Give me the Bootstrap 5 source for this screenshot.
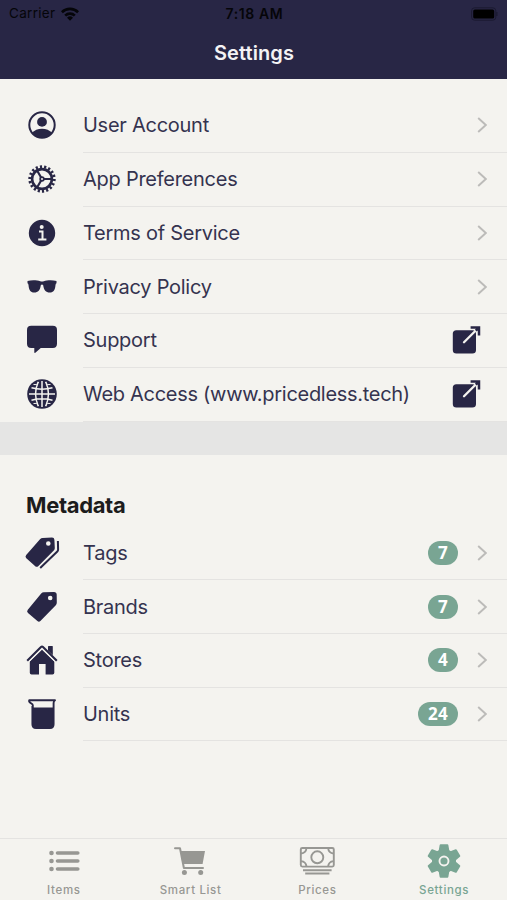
<!DOCTYPE html>
<html lang="en">
<head>
<meta charset="utf-8">
<meta name="viewport" content="width=device-width, initial-scale=1">
<title>Settings</title>
<link href="https://cdn.jsdelivr.net/npm/bootstrap@5.3.0/dist/css/bootstrap.min.css" rel="stylesheet">
<style>
:root{--navy:#282645;--paper:#f4f3ef;--sage:#79a593}
body{font-family:Inter,"Liberation Sans",sans-serif;background:var(--paper);color:#35334f;height:900px;overflow:hidden}
svg{display:block;flex:none}
.topbar{background:var(--navy);height:79px}
.status{height:27px;color:#050509;font-size:13.5px;padding:0 9px;letter-spacing:.3px}
.status>*{flex:1 1 0}
.clock{font-size:14px;font-weight:600;letter-spacing:.6px;padding-left:2px}
.page-title{height:51px;color:#f4f3f5;font-size:20px;font-weight:600;letter-spacing:.1px;padding-left:1px}
.first-list{padding-top:20.1px}
.setting{height:53.75px;padding-left:24px}
.setting svg.glyph{color:var(--navy)}
.setting>svg.glyph{margin-top:-1px}
.setting-body{margin-left:23px;padding-right:20px;border-bottom:1px solid #e4e3e1;font-size:20px;letter-spacing:-.26px;white-space:nowrap}
.long-label{letter-spacing:-.29px}
.setting-body svg.glyph{margin-right:5.5px}
.band{height:33.8px;background:#e5e5e4}
.section-title{font-size:22px;font-weight:700;color:#1c1c1c;letter-spacing:-.35px;height:71px;padding:28px 0 0 26px;line-height:44.500px}
.count{font-family:"Open Sans","Noto Sans",sans-serif;background:var(--sage);font-size:17px;font-weight:700;height:24px;line-height:23.500px;padding:0 9.800px;margin-right:19px;letter-spacing:.4px}
.chev{color:#bcbbb9}
.tabs{height:62px;border-top:1px solid #e4e3e1;color:#979793;font-size:11.500px;font-weight:500;letter-spacing:.65px}
.tabs a{padding-top:4px;color:inherit}
.tabs .active{color:var(--sage)}
.tabs span{line-height:16px;margin-top:3px;margin-left:1px}
</style>
</head>
<body class="d-flex flex-column">
<svg width="0" height="0" class="position-absolute">
<defs>
<symbol id="chev" viewBox="0 0 10 18"><path d="M1.200 2L8.800 9L1.200 16" fill="none" stroke="currentColor" stroke-width="1.900"/></symbol>
<symbol id="ext" viewBox="0 0 30 30"><rect x=".8" y="5.200" width="23.200" height="23.400" rx="3.600" fill="currentColor"/><path d="M12 17.300L25.500 3.800" stroke="#f4f3ef" stroke-width="2.300" stroke-linecap="round"/><path d="M18.600 2.400H27V10.600M27 2.400L23.800 5.600" stroke="currentColor" stroke-width="2.500" fill="none"/></symbol>
</defs>
</svg>
<header class="topbar">
<div class="status d-flex align-items-center">
<div class="d-flex align-items-center gap-2"><span>Carrier</span>
<svg width="18" height="14" viewBox="0 0 18 14" style="margin-left:-2px"><g fill="none" stroke="currentColor" stroke-width="2.700"><path d="M.9 5.200A11.600 11.600 0 0 1 17.100 5.200"/><path d="M4.200 8.600A6.800 6.800 0 0 1 13.800 8.600"/></g><path d="M9 13.800L6 10.800A4.300 4.300 0 0 1 12 10.800Z" fill="currentColor"/></svg></div>
<div class="clock text-center">7:18 AM</div>
<div class="d-flex justify-content-end"><svg width="27" height="14" viewBox="0 0 27 14"><rect x=".6" y=".8" width="24.200" height="12.400" rx="3" fill="none" stroke="#1b1a31"/><rect x="2.200" y="2.400" width="21" height="9.200" rx="1.700" fill="#000"/><path d="M25.900 5v4" stroke="#1b1a31" stroke-width="1.200"/></svg></div>
</div>
<h1 class="page-title m-0 d-flex align-items-center justify-content-center">Settings</h1>
</header>

<main class="flex-grow-1">
<section class="first-list">
<div class="setting d-flex align-items-center">
<svg class="glyph" width="36" height="36" viewBox="0 0 36 36"><circle cx="18" cy="18" r="12.700" fill="none" stroke="currentColor" stroke-width="2"/><circle cx="18" cy="14.900" r="4.900" fill="currentColor"/><path d="M8 26.100C10.200 23.200 14 21.800 18 21.800S25.800 23.200 28 26.100A13 13 0 0 1 8 26.100Z" fill="currentColor"/></svg>
<div class="setting-body d-flex align-items-center flex-grow-1 h-100"><span class="flex-grow-1">User Account</span><svg class="chev" width="10" height="18"><use href="#chev"/></svg></div>
</div>
<div class="setting d-flex align-items-center">
<svg class="glyph" width="36" height="36" viewBox="0 0 36 36"><g fill="none" stroke="currentColor"><circle cx="18" cy="18" r="12.300" stroke-width="2.800" stroke-dasharray="2.200 2.128" pathLength="77.900"/><circle cx="18" cy="18" r="9.900" stroke-width="2.600"/><path d="M18.500 18H27.500M17.700 17.500L13.200 9.800M17.700 18.500L13.200 26.200" stroke-width="2.200"/></g><circle cx="18" cy="18" r="2.700" fill="currentColor"/><circle cx="18" cy="18" r="1" fill="#f4f3ef"/></svg>
<div class="setting-body d-flex align-items-center flex-grow-1 h-100"><span class="flex-grow-1">App Preferences</span><svg class="chev" width="10" height="18"><use href="#chev"/></svg></div>
</div>
<div class="setting d-flex align-items-center">
<svg class="glyph" width="36" height="36" viewBox="0 0 36 36"><circle cx="18" cy="18" r="13.200" fill="currentColor"/><circle cx="17.700" cy="11.900" r="2" fill="#f4f3ef"/><path d="M15 16.400H18.500V24.200M14.200 24.400H22.400" fill="none" stroke="#f4f3ef" stroke-width="2"/></svg>
<div class="setting-body d-flex align-items-center flex-grow-1 h-100"><span class="flex-grow-1">Terms of Service</span><svg class="chev" width="10" height="18"><use href="#chev"/></svg></div>
</div>
<div class="setting d-flex align-items-center">
<svg class="glyph" width="36" height="36" viewBox="0 0 36 36"><path d="M3.500 11.900C7.500 11 13 11.100 16.200 12.200Q18 12.700 19.800 12.200C23 11.100 28.500 11 32.500 11.900V14.200Q31.700 14.500 31.500 16C31 21.500 29.500 23.500 25.800 23.500C21.800 23.500 19.900 21 19.200 16.200Q18 14.900 16.800 16.200C16.100 21 14.200 23.500 10.200 23.500C6.500 23.500 5 21.500 4.500 16Q4.300 14.500 3.500 14.200Z" fill="currentColor"/></svg>
<div class="setting-body d-flex align-items-center flex-grow-1 h-100"><span class="flex-grow-1">Privacy Policy</span><svg class="chev" width="10" height="18"><use href="#chev"/></svg></div>
</div>
<div class="setting d-flex align-items-center">
<svg class="glyph" width="36" height="36" viewBox="0 0 36 36"><path d="M7.200 3.800H28.800Q33 3.800 33 8V21.800Q33 26 28.800 26H16.800L11.300 30.800Q10.300 31.400 10.300 30V26H7.200Q3 26 3 21.800V8Q3 3.800 7.200 3.800Z" fill="currentColor"/></svg>
<div class="setting-body d-flex align-items-center flex-grow-1 h-100"><span class="flex-grow-1">Support</span><svg class="glyph" width="30" height="30"><use href="#ext"/></svg></div>
</div>
<div class="setting d-flex align-items-center">
<svg class="glyph" width="36" height="36" viewBox="0 0 36 36"><circle cx="18" cy="18" r="14.800" fill="currentColor"/><g fill="none" stroke="#f4f3ef" stroke-width="1.500"><path d="M18 5V31M5 18H31M7.500 11.800Q18 14.600 28.500 11.800M7.500 24.200Q18 21.400 28.500 24.200"/><path d="M14.300 5.800Q8.800 18 14.300 30.200M21.700 5.800Q27.200 18 21.700 30.200"/><path d="M9.500 8.500Q13 10 14.500 6M26.500 8.500Q23 10 21.500 6M9.500 27.500Q13 26 14.500 30M26.500 27.500Q23 26 21.500 30" stroke-width="1"/></g></svg>
<div class="setting-body d-flex align-items-center flex-grow-1 h-100"><span class="flex-grow-1 long-label">Web Access (www.pricedless.tech)</span><svg class="glyph" width="30" height="30"><use href="#ext"/></svg></div>
</div>
</section>
<div class="band"></div>
<section>
<h2 class="section-title m-0">Metadata</h2>
<div class="setting d-flex align-items-center">
<svg class="glyph" width="36" height="36" viewBox="0 0 36 36"><path fill-rule="evenodd" d="M18.600 2.900L28 2.500Q30.300 2.500 30.400 4.800L30.800 13Q30.800 14.300 30 15.200L14.200 31.200Q12.600 32.600 11 31L2.300 23.300Q.700 21.700 2.200 20L16 4.200Q17.200 2.900 18.600 2.900ZM26.600 8.500A2.300 2.300 0 1 0 22 8.500A2.300 2.300 0 1 0 26.600 8.500Z" fill="currentColor"/><path d="M33.900 6L34.100 14.600Q34.100 15.700 33.300 16.500L16.200 33" fill="none" stroke="currentColor" stroke-width="2"/></svg>
<div class="setting-body d-flex align-items-center flex-grow-1 h-100"><span class="flex-grow-1">Tags</span><span class="badge rounded-pill count">7</span><svg class="chev" width="10" height="18"><use href="#chev"/></svg></div>
</div>
<div class="setting d-flex align-items-center">
<svg class="glyph" width="36" height="36" viewBox="0 0 36 36"><path fill-rule="evenodd" d="M19.800 3.300L30 3Q32.600 3 32.700 5.600L32.800 13.600Q32.800 15.100 31.800 16.200L16.400 32Q14.900 33.300 13.400 32L4 23.900Q2.300 22.400 3.800 20.700L17.200 4.600Q18.300 3.300 19.800 3.300ZM28.500 9A2.300 2.300 0 1 0 23.900 9A2.300 2.300 0 1 0 28.500 9Z" fill="currentColor"/></svg>
<div class="setting-body d-flex align-items-center flex-grow-1 h-100"><span class="flex-grow-1">Brands</span><span class="badge rounded-pill count">7</span><svg class="chev" width="10" height="18"><use href="#chev"/></svg></div>
</div>
<div class="setting d-flex align-items-center">
<svg class="glyph" width="36" height="36" viewBox="0 0 36 36"><g fill="currentColor"><path d="M18 7.800L30.300 19.600V30.700Q30.300 32.500 28.500 32.500H21.600V22H15V32.500H7.600Q5.800 32.500 5.800 30.700V19.600Z"/><path d="M24 4.600Q24 4 24.600 4H28.200Q28.800 4 28.800 4.600V13.200L24 8.600Z"/></g><path d="M3.200 18.800L17 5Q18 4 19 5L32.800 18.800" fill="none" stroke="currentColor" stroke-width="2.100"/><path d="M5 19.700L18 6.900L31 19.700" fill="none" stroke="#f4f3ef" stroke-width="1"/></svg>
<div class="setting-body d-flex align-items-center flex-grow-1 h-100"><span class="flex-grow-1">Stores</span><span class="badge rounded-pill count">4</span><svg class="chev" width="10" height="18"><use href="#chev"/></svg></div>
</div>
<div class="setting d-flex align-items-center">
<svg class="glyph" width="36" height="36" viewBox="0 0 36 36"><path d="M8.500 11.500V28.700Q8.500 31.300 11.100 31.300H26.600Q29.200 31.300 29.200 28.700V11.500Z" fill="currentColor"/><path d="M8.800 12V9.200Q8.800 8 7.200 7.300Q4.600 6 5.200 4.200H31Q29.600 5.200 29.600 7V28.200Q29.600 32 26 32H12Q8.400 32 8.400 28.200V10" fill="none" stroke="currentColor" stroke-width="1.900" stroke-linejoin="round"/></svg>
<div class="setting-body d-flex align-items-center flex-grow-1 h-100"><span class="flex-grow-1">Units</span><span class="badge rounded-pill count">24</span><svg class="chev" width="10" height="18"><use href="#chev"/></svg></div>
</div>
</section>
</main>

<nav class="tabs row g-0 text-center">
<a class="col d-flex flex-column align-items-center text-decoration-none" href="#"><svg width="40" height="36" viewBox="0 0 40 36"><g fill="currentColor"><circle cx="8.500" cy="10" r="2.300"/><circle cx="8.500" cy="18" r="2.300"/><circle cx="8.500" cy="26" r="2.300"/></g><path d="M14.500 10H34.800M14.500 18H34.800M14.500 26H34.800" stroke="currentColor" stroke-width="3.600" stroke-linecap="round"/></svg><span>Items</span></a>
<a class="col d-flex flex-column align-items-center text-decoration-none" href="#"><svg width="40" height="36" viewBox="0 0 40 36"><path d="M10.500 8H35L32.600 21H12.500Z" fill="currentColor"/><path d="M5 5.300H10L13.900 25H33" fill="none" stroke="currentColor" stroke-width="2" stroke-linecap="round" stroke-linejoin="round"/><circle cx="14.400" cy="29.500" r="2.500" fill="currentColor"/><circle cx="30.700" cy="29.500" r="2.500" fill="currentColor"/></svg><span>Smart List</span></a>
<a class="col d-flex flex-column align-items-center text-decoration-none" href="#"><svg width="40" height="36" viewBox="0 0 40 36"><g fill="none" stroke="currentColor" stroke-width="1.900"><rect x="3.800" y="5" width="33" height="18.600" rx="1.500"/><circle cx="20.300" cy="14.300" r="6"/><path d="M4 10.500Q9 10 9.500 5M36.600 10.500Q31.600 10 31.100 5M4 18.100Q9 18.600 9.500 23.600M36.600 18.100Q31.600 18.600 31.100 23.600"/><path d="M6 27.200H34.600M8.200 30.500H32.400"/></g></svg><span>Prices</span></a>
<a class="col d-flex flex-column align-items-center text-decoration-none active" href="#"><svg width="40" height="36" viewBox="0 0 40 36"><g fill="currentColor" stroke="currentColor" stroke-width="2" stroke-linejoin="round"><circle cx="20" cy="18" r="11"/><path id="tooth" d="M15.500 9L16.600 2.300H23.400L24.500 9Z"/><use href="#tooth" transform="rotate(60 20 18)"/><use href="#tooth" transform="rotate(120 20 18)"/><use href="#tooth" transform="rotate(180 20 18)"/><use href="#tooth" transform="rotate(240 20 18)"/><use href="#tooth" transform="rotate(300 20 18)"/></g><circle cx="20" cy="18" r="4.500" fill="none" stroke="#f4f3ef" stroke-width="1.900"/></svg><span>Settings</span></a>
</nav>
<script src="https://cdn.jsdelivr.net/npm/bootstrap@5.3.0/dist/js/bootstrap.bundle.min.js"></script>
</body>
</html>
